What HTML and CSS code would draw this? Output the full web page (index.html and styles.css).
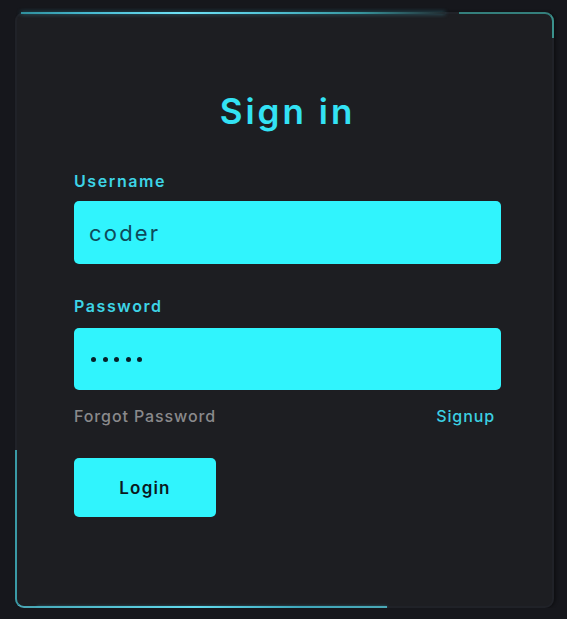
FILE: index.html
```html
<!DOCTYPE html>
<html lang="en">
<head>
<meta charset="utf-8">
<title>Sign in</title>
<link rel="stylesheet" href="styles.css">
</head>
<body>
<div class="card">
  <span class="glow glow-top"></span>
  <span class="glow glow-tr"></span>
  <span class="glow glow-bl"></span>
  <span class="glow glow-bottom"></span>
  <form class="form">
    <h1 class="title">Sign in</h1>
    <label class="label label-user">Username</label>
    <div class="field field-user">coder</div>
    <label class="label label-pass">Password</label>
    <div class="field field-pass" aria-label="•••••">
      <span class="dot"></span><span class="dot"></span><span class="dot"></span><span class="dot"></span><span class="dot"></span>
    </div>
    <div class="links">
      <a class="forgot">Forgot Password</a>
      <a class="signup">Signup</a>
    </div>
    <button type="button" class="btn">Login</button>
  </form>
</div>
</body>
</html>
```
FILE: styles.css
```css
html, body {
  margin: 0;
  padding: 0;
  background: #16171c;
  font-family: Inter, "Noto Sans", sans-serif;
}
.card {
  position: relative;
  box-sizing: border-box;
  width: 539px;
  height: 596px;
  margin: 12px 0 0 15px;
  background: #1d1e22;
  border: 2px solid #202228;
  border-radius: 9px;
  box-shadow: 2px 0 3px rgba(0,0,0,0.35);
}
.glow {
  position: absolute;
  pointer-events: none;
  z-index: 2;
}
.glow-top {
  top: -2px;
  left: 4px;
  width: 424px;
  height: 2px;
  background: linear-gradient(90deg, #2f8f9c 0%, #45b8cf 15%, #6fe2f6 38%, #52c4d8 58%, #37969e 80%, rgba(46,120,120,0.1) 100%);
  box-shadow: 0 0 4px rgba(80,210,235,0.5);
}
.glow-tr {
  top: -2px;
  right: -2px;
  width: 95px;
  height: 26px;
  box-sizing: border-box;
  border-top: 2px solid #347f7c;
  border-right: 2px solid #3a918c;
  border-top-right-radius: 9px;
}
.glow-bl {
  bottom: -2px;
  left: -2px;
  width: 372px;
  height: 158px;
  border-left: 2px solid #3a9aa6;
  border-bottom: 2px solid #4aa8b6;
  border-bottom-left-radius: 9px;
  box-sizing: border-box;
}
.glow-bottom {
  bottom: -2px;
  left: 20px;
  width: 350px;
  height: 2px;
  background: linear-gradient(90deg, rgba(70,180,200,0.3) 0%, #62dbee 45%, #3fa8bc 75%, rgba(40,100,120,0) 100%);
  box-shadow: 0 0 3px rgba(80,210,235,0.4);
}
.form {
  display: flex;
  flex-direction: column;
  width: 427px;
  margin-left: 57px;
  padding-top: 75px;
}
.title {
  margin: 0 0 38px;
  font-size: 35px;
  line-height: 44px;
  font-weight: 600;
  letter-spacing: 3px;
  text-align: center;
  color: #33e2f4;
}
.label {
  font-size: 16px;
  line-height: 20px;
  font-weight: 600;
  letter-spacing: 1.6px;
  color: #3dd4e6;
  margin-bottom: 10px;
}
.label-pass {
  margin-bottom: 12px;
}
.field {
  box-sizing: border-box;
  display: flex;
  align-items: center;
  background: #30f4fd;
  border-radius: 5px;
  padding-left: 15px;
  font-size: 22px;
  letter-spacing: 2.2px;
  color: #0e4b5a;
}
.field-user {
  height: 63px;
  margin-bottom: 32px;
}
.field-pass {
  height: 62px;
  margin-bottom: 18px;
  padding-left: 17px;
  gap: 6.5px;
}
.dot {
  width: 5px;
  height: 5px;
  border-radius: 50%;
  background: #06202a;
}
.links {
  display: flex;
  justify-content: space-between;
  padding-right: 6px;
  font-size: 16px;
  line-height: 20px;
  font-weight: 500;
  margin-bottom: 32px;
  margin-top: -2px;
}
.forgot {
  color: #8a8a8c;
  letter-spacing: 0.9px;
}
.signup {
  color: #3cd0e2;
  letter-spacing: 0.9px;
}
.btn {
  width: 142px;
  height: 59px;
  border: none;
  border-radius: 5px;
  background: #30f4fd;
  font-family: Inter, "Noto Sans", sans-serif;
  font-size: 17px;
  font-weight: 600;
  letter-spacing: 1.2px;
  color: #0b1a1e;
  padding: 0;
}
```
